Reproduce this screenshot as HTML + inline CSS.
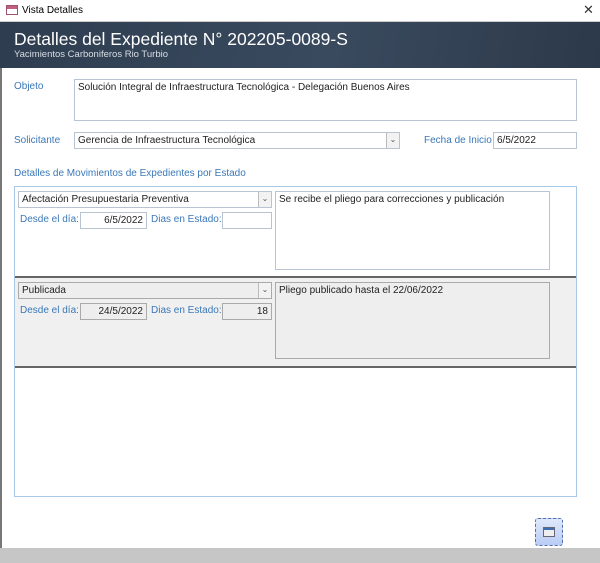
<!DOCTYPE html>
<html><head><meta charset="utf-8"><style>
*{box-sizing:border-box;margin:0;padding:0}
body{width:600px;height:563px;position:relative;background:#fff;font-family:"Liberation Sans",sans-serif;font-size:10px;overflow:hidden;color:#222}
.a{position:absolute}
.lbl{position:absolute;color:#3a78b8;font-size:10px}
.tb{position:absolute;border:1px solid #b8c4d2;background:#fff;padding:2px 3px 0;font-size:10px;line-height:12px;white-space:nowrap}
.g{background:#eee;border-color:#aaa}
.cb .arr{position:absolute;right:0;top:0;bottom:0;width:13px;border-left:1px solid #bbb;background:#f2f2f2;font-size:8px;text-align:center;line-height:14px;color:#555}
.r{text-align:right}
</style></head><body>
<div class="a" style="left:0;top:0;width:600px;height:22px;background:#fff;border-bottom:1px solid #ccc"></div>
<div class="a" style="left:6px;top:5px;width:12px;height:10px;border:1px solid #a05070;background:#fff"><div style="height:3px;background:#c06080"></div></div>
<div class="a" style="left:22px;top:5px;font-size:10px;color:#000">Vista Detalles</div>
<div class="a" style="left:583px;top:2px;font-size:13px;color:#333">✕</div>
<div class="a" style="left:0;top:22px;width:600px;height:46px;background:linear-gradient(100deg,#2e3d50 0%,#3a4a5e 55%,#2c394a 100%)"></div>
<div class="a" style="left:14px;top:29px;font-size:17.5px;color:#fff">Detalles del Expediente N° 202205-0089-S</div>
<div class="a" style="left:14px;top:49px;font-size:9.5px;color:#d8dde4">Yacimientos Carboniferos Rio Turbio</div>
<div class="a" style="left:0;top:68px;width:2px;height:480px;background:#777"></div>

<div class="lbl" style="left:14px;top:81px">Objeto</div>
<div class="tb" style="left:74px;top:79px;width:503px;height:42px">Solución Integral de Infraestructura Tecnológica - Delegación Buenos Aires</div>
<div class="lbl" style="left:14px;top:135px">Solicitante</div>
<div class="tb cb" style="left:74px;top:132px;width:326px;height:17px">Gerencia de Infraestructura Tecnológica<span class="arr">⌄</span></div>
<div class="lbl" style="left:424px;top:135px">Fecha de Inicio</div>
<div class="tb" style="left:493px;top:132px;width:84px;height:17px">6/5/2022</div>
<div class="lbl" style="left:14px;top:168px">Detalles de Movimientos de Expedientes por Estado</div>

<div class="a" style="left:14px;top:186px;width:563px;height:311px;border:1px solid #a8c8e8;background:#fff"></div>
<div class="a" style="left:15px;top:276px;width:561px;height:2px;background:#666"></div>
<div class="a" style="left:15px;top:278px;width:561px;height:88px;background:#f0f0f0"></div>
<div class="a" style="left:15px;top:366px;width:561px;height:2px;background:#666"></div>

<div class="tb cb" style="left:18px;top:191px;width:254px;height:17px">Afectación Presupuestaria Preventiva<span class="arr">⌄</span></div>
<div class="lbl" style="left:20px;top:214px">Desde el día:</div>
<div class="tb r" style="left:80px;top:212px;width:67px;height:17px">6/5/2022</div>
<div class="lbl" style="left:151px;top:214px">Dias en Estado:</div>
<div class="tb" style="left:222px;top:212px;width:50px;height:17px"></div>
<div class="tb" style="left:275px;top:191px;width:275px;height:79px">Se recibe el pliego para correcciones y publicación</div>

<div class="tb cb g" style="left:18px;top:282px;width:254px;height:17px">Publicada<span class="arr">⌄</span></div>
<div class="lbl" style="left:20px;top:305px">Desde el día:</div>
<div class="tb r g" style="left:80px;top:303px;width:67px;height:17px">24/5/2022</div>
<div class="lbl" style="left:151px;top:305px">Dias en Estado:</div>
<div class="tb r g" style="left:222px;top:303px;width:50px;height:17px">18</div>
<div class="tb g" style="left:275px;top:282px;width:275px;height:77px">Pliego publicado hasta el 22/06/2022</div>

<div class="a" style="left:535px;top:518px;width:28px;height:28px;border:1px dashed #5570a8;border-radius:3px;background:linear-gradient(#dfe8fb,#b9ccf5)"></div>
<div class="a" style="left:543px;top:527px;width:12px;height:10px;border:1px solid #667;background:#eee"><div style="height:2px;background:#3f6fb0"></div></div>
<div class="a" style="left:0;top:548px;width:600px;height:15px;background:#c6c6c6"></div>
</body></html>
